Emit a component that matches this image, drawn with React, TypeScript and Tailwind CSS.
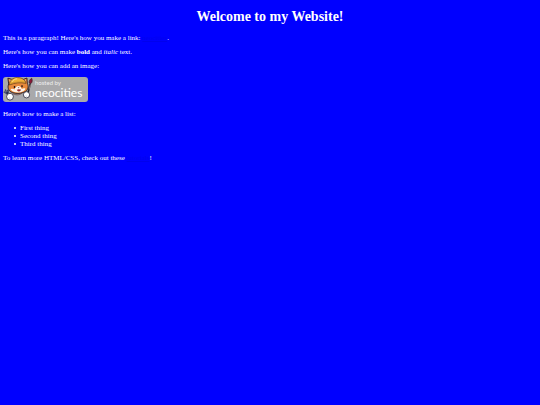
const LIST_ITEMS = ["First thing", "Second thing", "Third thing"];

function NeocitiesBadge() {
  return (
    <svg
      width="85"
      height="25"
      viewBox="0 0 85 25"
      role="img"
      aria-label="hosted by neocities"
      className="block"
    >
      <rect width="85" height="25" rx="3" fill="#a9a9ab" />

      {/* fork */}
      <path d="M.8 14.800l3.400 2.200M2.200 12.600l2.200 4.400M4.900 12.800l.2 4M4.200 16.500l2 3.500" stroke="#20284c" strokeWidth="1.300" fill="none" />
      <path d="M1.400 15.200l2 1.300M2.600 13.400l1 2" stroke="#d5d9ee" strokeWidth=".4" />

      {/* brush */}
      <path d="M27.300 6.500l-2.300 9.500" stroke="#20222e" strokeWidth="1.600" />
      <path d="M27.300 7.500l-1.200 5" stroke="#d8b29d" strokeWidth=".6" />
      <path d="M26.200 5.800c-.3-1.800.7-3.600 2.500-4.600.9 2 .7 4-.8 5.400z" fill="#8b1836" stroke="#2b1420" strokeWidth=".6" />

      {/* ears and head */}
      <path d="M4.900 1.200l4.200 1.200h11.500l3.300-1.400.4 5.200c1.500 3 .9 6.500-1.900 8.300-3.900 2.500-11.100 2.500-14.600.3-2.800-1.800-3.300-5-2.100-7.800z" fill="#e7893a" stroke="#2b1b1d" strokeWidth=".9" />
      <path d="M6.300 2.600l2 .8-1.200 1.800zM22.800 2.300l-1.800 1 1.300 1.700z" fill="#f6c7ad" />
      <path d="M7.600 12.200c1.500-.8 2.900-.4 4 .4.600-2.500 2-3.700 3.700-3.700s2.800 1.200 3.600 3c1.200-.8 2.500-.8 3.600-.2-1.200 2.500-4 3.700-7.200 3.700-3.600 0-6.500-1-7.700-3.200z" fill="#fff3e5" />

      {/* helmet */}
      <path d="M6.400 8C6.700 3 10 .6 14.300.6c4.500 0 7.900 2 8.700 5.800-5.200-1.200-11-.8-16.600 1.600z" fill="#f0b13a" stroke="#603a18" strokeWidth=".7" />
      <path d="M9.200 4.800c1.200-2.200 3-3 5-3" stroke="#ffe18b" strokeWidth="1" fill="none" />
      <path d="M7.500 6.700c4.600-1.900 10-2.300 14.500-1.500" stroke="#b87925" strokeWidth=".5" fill="none" />

      {/* face */}
      <path d="M11.500 8.900v2M19 8.200v2" stroke="#21151a" strokeWidth="1.300" />
      <path d="M14.700 10.200h1.800l-.9 1z" fill="#612b31" />
      <path d="M13.800 12.200c.9.800 1.700.6 2-.4.400 1 1.300 1.100 2.100.2l-.3 1.700c-.9.900-2.500.9-3.300.1z" fill="#9a3035" />

      {/* paws */}
      <path d="M9.500 16.200c2.300 2.100 6.800 2.200 9.300 0" stroke="#5c332c" strokeWidth=".7" fill="none" />
      <circle cx="7" cy="19.700" r="3.400" fill="#fff" stroke="#26263a" strokeWidth=".8" />
      <circle cx="23.500" cy="17.800" r="3.100" fill="#fff" stroke="#26263a" strokeWidth=".8" />
      <path d="M5.800 20.700l1.600 1M22.600 18.800l1.500.7" stroke="#b9bac5" strokeWidth=".6" />

      <text x="32" y="8" fontSize="6" fill="#eeeeee" fontFamily="Lato, sans-serif">
        hosted by
      </text>
      <text x="32" y="20" fontSize="12" fill="#ffffff" fontFamily="Lato, sans-serif">
        neocities
      </text>
    </svg>
  );
}

export default function App() {
  return (
    <div className="min-h-screen bg-[#0000ff] px-[3px] pt-2 font-['Liberation_Serif',serif] text-[7px] leading-2 text-white">
      <h1 className="mb-2 text-center text-[14px] leading-[18px] font-bold">
        Welcome to my Website!
      </h1>

      <div className="flex flex-col gap-1.5">
        <p>
          This is a paragraph! Here's how you make a link:{" "}
          <a href="https://neocities.org" className="text-[#0000ee] underline">
            neocities
          </a>
          .
        </p>

        <p>
          Here's how you can make <strong>bold</strong> and <em>italic</em> text.
        </p>

        <p>Here's how you can add an image:</p>
        <div className="pt-px pb-0.5">
          <NeocitiesBadge />
        </div>

        <p>Here's how to make a list:</p>
        <ul className="pl-[11px]">
          {LIST_ITEMS.map((item) => (
            <li
              key={item}
              className="flex items-center gap-1 before:size-0.5 before:rounded-full before:bg-white"
            >
              {item}
            </li>
          ))}
        </ul>

        <p>
          To learn more HTML/CSS, check out these{" "}
          <a href="https://neocities.org/tutorials" className="text-[#0000ee] underline">
            tutorials
          </a>
          !
        </p>
      </div>
    </div>
  );
}
